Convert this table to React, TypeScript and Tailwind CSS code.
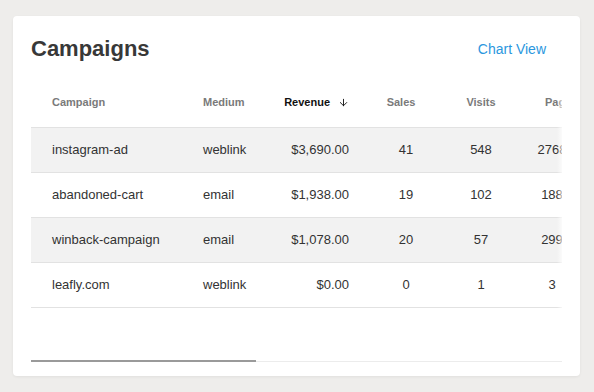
import { ArrowDown } from 'lucide-react'

type Row = {
  campaign: string
  medium: string
  revenue: string
  sales: number
  visits: number
  pages: number
}

const rows: Row[] = [
  { campaign: 'instagram-ad', medium: 'weblink', revenue: '$3,690.00', sales: 41, visits: 548, pages: 2768 },
  { campaign: 'abandoned-cart', medium: 'email', revenue: '$1,938.00', sales: 19, visits: 102, pages: 188 },
  { campaign: 'winback-campaign', medium: 'email', revenue: '$1,078.00', sales: 20, visits: 57, pages: 299 },
  { campaign: 'leafly.com', medium: 'weblink', revenue: '$0.00', sales: 0, visits: 1, pages: 3 },
]

export default function App() {
  return (
    <div
      className="min-h-[392px] w-full bg-[#eeedeb] pl-[13px] pr-[14px] pt-[16px] pb-[16px]"
      style={{ fontFamily: '"Liberation Sans", Arial, sans-serif' }}
    >
      <div className="h-[360px] rounded-[4px] bg-white px-[18px] pt-[20px] shadow-[0_1px_3px_rgba(0,0,0,0.06)]">
        <div className="flex items-center justify-between">
          <h1 className="text-[22px] leading-[26px] font-bold text-[#383838]">Campaigns</h1>
          <button className="mr-4 text-[14px] text-[#2b97de]">Chart View</button>
        </div>

        <div className="relative mt-[20px] h-[226px] overflow-hidden">
          <div className="w-[900px]">
            {/* header */}
            <div className="flex h-[46px] border-b border-[#e2e2e2] pt-[14px] text-[11px] leading-[13px] font-bold text-[#7a7a7a]">
              <div className="w-[151px] pl-[21px]">Campaign</div>
              <div className="w-[84px] pl-[21px]">Medium</div>
              <div className="flex w-[104px] items-start justify-end gap-[8px] pr-[21px] text-[#111]">
                Revenue
                <ArrowDown size={11} strokeWidth={2} className="mt-[1px]" />
              </div>
              <div className="w-[72px] pr-[10px] text-center">Sales</div>
              <div className="w-[78px] text-center">Visits</div>
              <div className="w-[62px] pl-[25px]">Pages</div>
              <div className="w-[90px] text-center">Orders</div>
            </div>

            {rows.map((r, i) => (
              <div
                key={r.campaign}
                className={`flex h-[45px] items-center border-b border-[#e2e2e2] text-[13px] text-[#333] ${
                  i % 2 === 0 ? 'bg-[#f2f2f2]' : 'bg-white'
                }`}
              >
                <div className="w-[151px] pl-[21px]">{r.campaign}</div>
                <div className="w-[84px] pl-[21px]">{r.medium}</div>
                <div className="w-[104px] pr-[21px] text-right">{r.revenue}</div>
                <div className="w-[72px] text-center">{r.sales}</div>
                <div className="w-[78px] text-center">{r.visits}</div>
                <div className="w-[62px] pl-[2px] text-center">{r.pages}</div>
                <div className="w-[90px] text-center">{r.sales}</div>
              </div>
            ))}
          </div>
          <div className="pointer-events-none absolute top-0 right-0 h-full w-[5px] bg-gradient-to-r from-white/0 to-white/70" />
        </div>

        {/* scrollbar */}
        <div className="relative mt-[52px] h-[2px] border-b border-[#ececec]">
          <div className="absolute top-0 left-0 h-[2px] w-[225px] bg-[#9a9a9a]" />
        </div>
      </div>
    </div>
  )
}
